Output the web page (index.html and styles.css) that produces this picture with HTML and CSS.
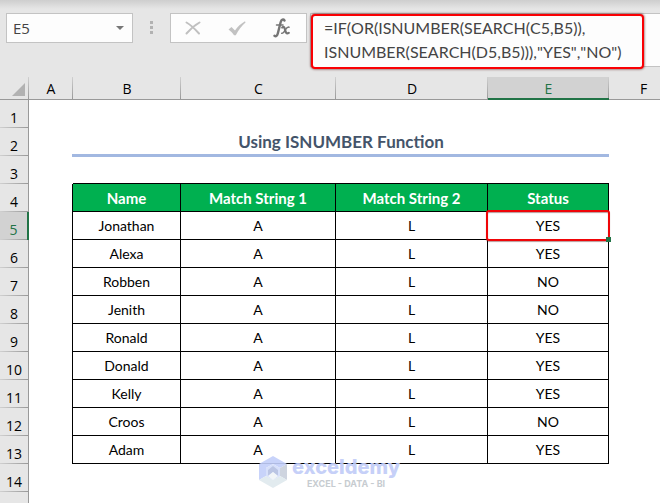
FILE: index.html
```html
<!DOCTYPE html>
<html lang="en">
<head>
<meta charset="utf-8">
<title>Using ISNUMBER Function</title>
<link rel="stylesheet" href="styles.css">
</head>
<body>
<header class="bar">
  <div class="namebox">
    <input class="namebox-input" type="text" value="E5" aria-label="Name box">
    <button class="namebox-toggle" type="button" aria-label="Open name list">
      <svg width="8" height="4" viewBox="0 0 8 4"><path d="M0 0h8L4 4z" fill="#777"/></svg>
    </button>
  </div>
  <div class="grip"><i></i><i></i><i></i></div>
  <div class="actions">
    <button type="button" aria-label="Cancel">
      <svg width="16" height="14" viewBox="0 0 16 14" fill="none" stroke="#c0c0c0" stroke-linecap="round"><path d="M1.500 1.500C5 3.500 10 8 14 12.500" stroke-width="2"/><path d="M14.500 1.500C10 4 5 8.500 1.500 12.500" stroke-width="2"/></svg>
    </button>
    <button type="button" aria-label="Enter">
      <svg width="18" height="15" viewBox="0 0 18 15"><path d="M.5 8.500L3.500 6L7 9.500C9.500 6 13 2.500 17 .3L17.500 1.500C13.500 5 10.500 9 7.800 14.200H6C4.500 11.800 2.500 10 .5 8.500z" fill="#c2c2c2"/></svg>
    </button>
    <button type="button" aria-label="Insert function">
      <svg width="18" height="20" viewBox="0 0 18 20" fill="none" stroke="#757575" stroke-linecap="round"><path d="M11.500 2.500C10.300 .8 8.500 1.500 7.700 4L4.800 15.500C4.300 17.700 3 19 1.500 17.800" stroke-width="2.400"/><path d="M3.500 7H10" stroke-width="1.500"/><path d="M9.200 9.500C11 8 11.500 9.500 12 11.500C12.600 14.200 13.300 16.500 15.800 14.800" stroke-width="2.200"/><path d="M16 9.200C14 8.500 12.500 11.500 11.700 12.800C10.800 14.500 10 15.800 8.700 15.200" stroke-width="1.500"/></svg>
    </button>
  </div>
  <div class="formula">
    <textarea class="formula-input" rows="2" spellcheck="false" aria-label="Formula bar">=IF(OR(ISNUMBER(SEARCH(C5,B5)),
ISNUMBER(SEARCH(D5,B5))),"YES","NO")</textarea>
  </div>
</header>
<main class="sheet">
<table class="grid">
  <colgroup><col class="w-num"><col class="w-a"><col class="w-b"><col class="w-c"><col class="w-d"><col class="w-e"><col></colgroup>
  <thead>
    <tr><th class="corner"><svg width="13" height="13" viewBox="0 0 13 13"><path d="M13 0v13H0z" fill="#b2b2b2"/></svg></th><th>A</th><th>B</th><th>C</th><th>D</th><th class="active">E</th><th class="last"><span>F</span></th></tr>
  </thead>
  <tbody>
    <tr><th>1</th><td colspan="6"></td></tr>
    <tr><th>2</th><td></td><td class="title" colspan="4">Using ISNUMBER Function</td><td></td></tr>
    <tr><th>3</th><td></td><td class="line"></td><td class="line"></td><td class="line"></td><td class="line"></td><td></td></tr>
    <tr class="data head"><th>4</th><td></td><td>Name</td><td>Match String 1</td><td>Match String 2</td><td>Status</td><td></td></tr>
    <tr class="data"><th class="active">5</th><td></td><td>Jonathan</td><td>A</td><td>L</td><td class="selected">YES</td><td></td></tr>
    <tr class="data"><th>6</th><td></td><td>Alexa</td><td>A</td><td>L</td><td>YES</td><td></td></tr>
    <tr class="data"><th>7</th><td></td><td>Robben</td><td>A</td><td>L</td><td>NO</td><td></td></tr>
    <tr class="data"><th>8</th><td></td><td>Jenith</td><td>A</td><td>L</td><td>NO</td><td></td></tr>
    <tr class="data"><th>9</th><td></td><td>Ronald</td><td>A</td><td>L</td><td>YES</td><td></td></tr>
    <tr class="data"><th>10</th><td></td><td>Donald</td><td>A</td><td>L</td><td>YES</td><td></td></tr>
    <tr class="data"><th>11</th><td></td><td>Kelly</td><td>A</td><td>L</td><td>YES</td><td></td></tr>
    <tr class="data"><th>12</th><td></td><td>Croos</td><td>A</td><td>L</td><td>NO</td><td></td></tr>
    <tr class="data"><th>13</th><td></td><td>Adam</td><td>A</td><td>L</td><td>YES</td><td></td></tr>
    <tr><th>14</th><td colspan="6"></td></tr>
    <tr class="rest"><th></th><td colspan="6"></td></tr>
  </tbody>
</table>
<div class="watermark">
  <svg width="28" height="32" viewBox="0 0 28 32"><path d="M14 0L28 8L21 12L14 8L7 12V20L0 24V8z" fill="#c3cffa"/><path d="M28 8V24L21 20V12z" fill="#c9d0dc"/><path d="M0 24L7 20L14 24L21 20L28 24L14 32z" fill="#dfe9ee"/><path d="M14 8L21 12V20L14 24L7 20V12z" fill="#d3ddfa"/><path d="M14 10L19 14V20L14 16L9 20V14z" fill="#b4bfe2"/><path d="M14 16L19 20L14 24L9 20z" fill="#f1f5f8"/></svg>
  <div class="brand"><span class="brand-name">exceldemy</span><span class="brand-tag">EXCEL - DATA - BI</span></div>
</div>
</main>
</body>
</html>
```
FILE: styles.css
```css
* { box-sizing: border-box; }
body {
  margin: 0;
  min-height: 100vh;
  display: flex;
  flex-direction: column;
  overflow: hidden;
  background: #fff;
  color: #000;
  font-family: Lato, "Liberation Sans", sans-serif;
}
button, input, textarea { border: 0; padding: 0; margin: 0; background: none; outline: 0; }

/* Formula bar */
.bar {
  display: flex;
  align-items: flex-start;
  padding: 13px 0 10px 6px;
  background: linear-gradient(#cecece, #e6e6e6 9px);
}
.namebox, .actions {
  display: flex;
  align-items: center;
  height: 30px;
  background: #fdfdfd;
  border: 1px solid #c3c3c3;
}
.namebox { width: 127px; }
.namebox-input {
  flex: 1;
  min-width: 0;
  padding-left: 6px;
  font: 15px "Open Sans", sans-serif;
  color: #444;
}
.namebox-toggle { display: flex; justify-content: center; width: 24px; }
.grip {
  display: flex;
  flex-direction: column;
  align-items: center;
  gap: 2px;
  width: 37px;
  padding-top: 8px;
}
.grip i { width: 3px; height: 3px; background: #b2b2b2; }
.actions { width: 137px; justify-content: space-between; padding: 0 15px 0 14px; }
.actions button { display: flex; }
.formula {
  flex: 1;
  height: 54px;
  margin-left: 3px;
  padding-right: 16px;
  border: 1px solid #c3c3c3;
  border-right: 0;
  background: #fdfdfd;
}
.formula-input {
  display: block;
  width: 100%;
  height: 55px;
  padding: 0 0 0 11px;
  border: 2px solid #fa0004;
  border-radius: 4px;
  box-shadow: 0 0 2px 1px rgba(80, 0, 0, .4);
  background: #fdfdfd;
  resize: none;
  overflow: hidden;
  white-space: pre;
  font: 16px/24px Lato, sans-serif;
  font-kerning: none;
  color: #444;
}

/* Worksheet */
.sheet { position: relative; flex: 1; }
.grid { width: 100%; table-layout: fixed; border-collapse: separate; border-spacing: 0; }
.w-num { width: 29px; }
.w-a { width: 44px; }
.w-b { width: 108px; }
.w-c { width: 155px; }
.w-d { width: 152px; }
.w-e { width: 121px; }
.grid th, .grid td { height: 28px; padding: 0; text-align: center; line-height: 20px; font-size: 14px; }
.grid th { font-family: "Open Sans", sans-serif; font-weight: 400; background: #e6e6e6; }
.grid thead th {
  height: 23px;
  padding-top: 2px;
  line-height: 18px;
  border-bottom: 1px solid #999;
  background: linear-gradient(#d0d0d0, #999) right / 1px 100% no-repeat #e6e6e6;
}
.grid thead .corner { vertical-align: bottom; text-align: right; padding: 0 4px 3px 0; line-height: 0; }
.grid thead .active { background-color: #d2d2d2; border-bottom: 2px solid #217346; }
.grid thead .last { background-image: none; text-align: left; padding-left: 31px; }
.grid .active { color: #217346; }
.grid tbody th {
  padding-top: 7px;
  border-right: 1px solid #999;
  background: linear-gradient(90deg, #d0d0d0, #999) bottom / 100% 1px no-repeat #e6e6e6;
}
.grid tbody .active { background-color: #d2d2d2; border-right: 2px solid #217346; }
.grid .rest th { background-image: none; }
.grid .title {
  position: relative;
  font-size: 17px;
  font-weight: 700;
  color: #44546a;
}
.title::after {
  content: "";
  position: absolute;
  inset: auto 0 -1px -1px;
  height: 3px;
  background: #a2b8e1;
}
.grid .line { border-bottom: 1px solid #000; }
.data td:nth-child(n+3):nth-child(-n+6) { border: 0 solid #000; border-width: 0 1px 1px 0; }
.data td:nth-child(2) { border-right: 1px solid #000; }
.head td:nth-child(n+3):nth-child(-n+6) { background: #00b050; color: #fff; font-weight: 700; font-size: 15px; }
.selected { position: relative; }
.selected::before {
  content: "";
  position: absolute;
  inset: -2px;
  border: 2px solid #f00508;
  border-radius: 3px;
  box-shadow: 0 1px 1px rgba(80, 0, 0, .4), inset 0 1px 1px rgba(80, 0, 0, .4);
}
.selected::after {
  content: "";
  position: absolute;
  right: -3px;
  bottom: -3px;
  width: 5px;
  height: 5px;
  background: #217346;
}

/* Watermark over the lower rows */
.watermark {
  position: absolute;
  left: 259px;
  top: 379px;
  display: flex;
  gap: 5px;
  opacity: .9;
}
.brand { display: flex; flex-direction: column; align-items: center; font-family: Inter, sans-serif; }
.brand-name { font-size: 20px; line-height: 23px; font-weight: 800; color: #c0cbf8; }
.brand-tag { font-size: 9px; line-height: 9px; font-weight: 700; color: #c2c7cc; }
```
